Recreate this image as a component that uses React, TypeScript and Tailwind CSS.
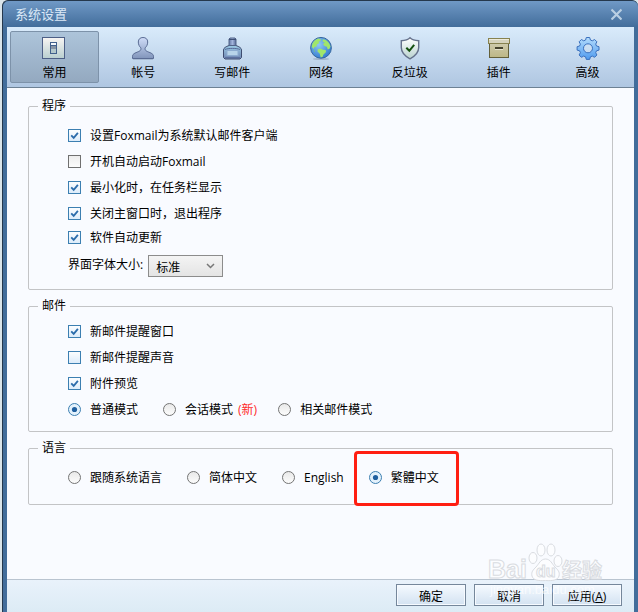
import React, { useState } from 'react';

const GeneralIcon = () => (
  <svg width="24" height="24" viewBox="0 0 24 24" aria-hidden="true">
    <defs>
      <linearGradient id="general-plate" x1="0" y1="0" x2="0" y2="1">
        <stop offset="0" stopColor="#f8f5f3" />
        <stop offset="1" stopColor="#b9cfd0" />
      </linearGradient>
    </defs>
    <rect x="0.5" y="1.5" width="22" height="21" fill="url(#general-plate)" stroke="#4d5f86" />
    <rect x="8.5" y="6.5" width="6" height="11" fill="#8794a3" stroke="#41608c" />
    <rect x="9" y="7" width="5" height="2" fill="#f4f9fc" />
    <path d="M9 9.5h5" stroke="#41608c" />
    <rect x="9" y="13" width="5" height="4" fill="#b3c8cc" />
  </svg>
);

const AccountIcon = () => (
  <svg width="24" height="24" viewBox="0 0 24 24" aria-hidden="true">
    <defs>
      <linearGradient id="account-body" x1="0" y1="0" x2="0" y2="1">
        <stop offset="0" stopColor="#cfdcf8" />
        <stop offset="1" stopColor="#8195bb" />
      </linearGradient>
    </defs>
    <path
      d="M12 1.5c-2.8 0-4.7 1.6-4.7 4.5 0 2.6 1.2 4.6 2.5 5.8.5 1.4-.1 2.7-1.6 3.5-2.6 1.3-6.7 2-6.7 5v2.2h21v-2.2c0-3-4.1-3.7-6.7-5-1.5-.8-2.1-2.1-1.6-3.5 1.3-1.2 2.5-3.2 2.5-5.8 0-2.9-1.9-4.5-4.7-4.5z"
      fill="url(#account-body)"
      stroke="#5a6c94"
    />
    <path d="M2 23.5h20" stroke="#7f92b0" strokeOpacity=".4" />
  </svg>
);

const ComposeIcon = () => (
  <svg width="24" height="24" viewBox="0 0 24 24" aria-hidden="true">
    <defs>
      <linearGradient id="ink-bottle" x1="0" y1="0" x2="0" y2="1">
        <stop offset="0" stopColor="#9ccbe6" />
        <stop offset="1" stopColor="#7186b2" />
      </linearGradient>
      <linearGradient id="ink-cap" x1="0" y1="0" x2="1" y2="0">
        <stop offset="0" stopColor="#6478a5" />
        <stop offset=".5" stopColor="#a3b5dc" />
        <stop offset="1" stopColor="#566a98" />
      </linearGradient>
    </defs>
    <path d="M9 9.5h7c3 1.2 5.5 2.3 5.5 4.5v7.500l-1.500 1.500H5l-1.500-1.500V14c0-2.200 2.500-3.300 5.500-4.500z" fill="url(#ink-bottle)" stroke="#3e4c70" />
    <path d="M9 3l1-1h5l1 1v6.500H9z" fill="url(#ink-cap)" stroke="#526488" />
    <path d="M9 3.500h7" stroke="#3f5076" />
    <path d="M5 13.500c3-1.500 12-1.500 15 0" fill="none" stroke="#566a98" />
    <rect x="7" y="14.5" width="11" height="5" fill="#b8d4e9" stroke="#8dacd0" />
    <path d="M5 21.500h15" stroke="#5c709f" />
  </svg>
);

const NetworkIcon = () => (
  <svg width="24" height="24" viewBox="0 0 24 24" aria-hidden="true">
    <defs>
      <radialGradient id="globe-sea" cx=".4" cy=".35" r=".7">
        <stop offset="0" stopColor="#8fc8f5" />
        <stop offset="1" stopColor="#2f78cf" />
      </radialGradient>
    </defs>
    <ellipse cx="12" cy="23" rx="8" ry="1" fill="#7d92ac" fillOpacity=".5" />
    <circle cx="12" cy="11.8" r="10.4" fill="url(#globe-sea)" stroke="#39699f" />
    <path d="M2.800 11c.3-4 3-7.400 6.600-8.400l2.400.7-.2 1.700-2 .8.600 1.500-2.200 1-.5 2.200-2.200.6-.3 2z" fill="#a0e66c" />
    <path d="M13.800 3.200c3.800.5 7 3.600 7.700 7.400l-1 2.200-1.700.6-1-2.700-2.300-.6-1.600-2.100 1.900-1.200-2.200-1.400z" fill="#a0e66c" />
    <path d="M8.800 13.200l2.600-.8 2.600 1.300 2.700.4.300 2-2.700 2.600-.6 2.100-2 .6-.9-3.600-2.300-2.200z" fill="#a0e66c" />
    <path d="M4.400 13l1.500 2.300-.6.900z" fill="#7acb72" />
  </svg>
);

const SpamIcon = () => (
  <svg width="24" height="24" viewBox="0 0 24 24" aria-hidden="true">
    <defs>
      <linearGradient id="shield-face" x1="0" y1="0" x2="0" y2="1">
        <stop offset="0" stopColor="#ffffff" />
        <stop offset="1" stopColor="#b9d2cf" />
      </linearGradient>
    </defs>
    <path
      d="M12 1.800c1.700 1.700 4.600 2.800 8.700 2.900v6.800c0 5-3.300 8.400-8.700 11.300-5.400-2.900-8.700-6.300-8.700-11.300V4.700c4.100-.1 7-1.200 8.700-2.900z"
      fill="url(#shield-face)"
      stroke="#65718b"
      strokeWidth="1.4"
    />
    <path d="M8.300 11.800l3 3 4.900-6" fill="none" stroke="#14500f" strokeWidth="2" />
  </svg>
);

const PluginIcon = () => (
  <svg width="24" height="24" viewBox="0 0 24 24" aria-hidden="true">
    <defs>
      <linearGradient id="box-front" x1="0" y1="0" x2="0" y2="1">
        <stop offset="0" stopColor="#cfcbae" />
        <stop offset="1" stopColor="#bdb785" />
      </linearGradient>
    </defs>
    <rect x="2.5" y="6.5" width="19" height="15" fill="url(#box-front)" stroke="#646039" />
    <rect x="1.5" y="2.5" width="21" height="5" fill="#d6d3bd" stroke="#87824f" />
    <path d="M2 3.500h20" stroke="#eceadb" />
    <path d="M8 12h8" stroke="#45422d" strokeWidth="2" />
    <path d="M8 13.500h8" stroke="#e6e3cd" />
  </svg>
);

const AdvancedIcon = () => (
  <svg width="24" height="24" viewBox="0 0 24 24" aria-hidden="true">
    <defs>
      <linearGradient id="gear-face" x1="0" y1="0" x2="0" y2="1">
        <stop offset="0" stopColor="#b4dcfc" />
        <stop offset="1" stopColor="#4f9bef" />
      </linearGradient>
    </defs>
    <path
      fillRule="evenodd"
      d="M10.300 1.500h3.400l.7 2.500 1.900.8 2.300-1.300 2.300 2.300-1.200 2.300.8 1.900 2.500.7v3.400l-2.500.7-.8 1.900 1.200 2.300-2.300 2.300-2.300-1.200-1.900.8-.7 2.500h-3.400l-.7-2.500-1.900-.8-2.300 1.200-2.300-2.300 1.300-2.300-.8-1.900-2.500-.7v-3.400l2.500-.7.8-1.900-1.300-2.300 2.300-2.300 2.300 1.300 1.900-.8zM12 7.800a4.500 4.500 0 1 0 0 9 4.500 4.500 0 0 0 0-9z"
      fill="url(#gear-face)"
      stroke="#3a70bd"
      strokeLinejoin="round"
    />
  </svg>
);

const tabs = [
  { id: 'general', label: '常用', icon: <GeneralIcon /> },
  { id: 'account', label: '帐号', icon: <AccountIcon /> },
  { id: 'compose', label: '写邮件', icon: <ComposeIcon /> },
  { id: 'network', label: '网络', icon: <NetworkIcon /> },
  { id: 'spam', label: '反垃圾', icon: <SpamIcon /> },
  { id: 'plugin', label: '插件', icon: <PluginIcon /> },
  { id: 'advanced', label: '高级', icon: <AdvancedIcon /> },
];

interface CheckRowProps {
  label: string;
  defaultChecked?: boolean;
  highlighted?: boolean;
}

const CheckRow: React.FC<CheckRowProps> = ({ label, defaultChecked = false, highlighted = defaultChecked }) => (
  <label className="flex h-[26px] items-center gap-[9px] last:h-[22px]">
    <span className="grid">
      <input
        type="checkbox"
        defaultChecked={defaultChecked}
        className={`peer col-start-1 row-start-1 size-[13px] appearance-none border bg-linear-to-b ${
          highlighted ? 'border-[#3c7fb1] from-[#fbfdff] to-[#dcecfa]' : 'border-[#707070] from-[#ededed] to-[#fcfcfc]'
        }`}
      />
      <svg
        className="pointer-events-none invisible col-start-1 row-start-1 peer-checked:visible"
        width="13"
        height="13"
        viewBox="0 0 13 13"
        aria-hidden="true"
      >
        <path d="M3.200 6.300l2.500 2.600 4.200-5" fill="none" stroke="#2b6cab" strokeWidth="1.8" />
      </svg>
    </span>
    <span className="pt-0.5">{label}</span>
  </label>
);

interface RadioOptionProps {
  name: string;
  defaultChecked?: boolean;
  boxed?: boolean;
  children: React.ReactNode;
}

const RadioOption: React.FC<RadioOptionProps> = ({ name, defaultChecked, boxed, children }) => (
  <label className="relative flex h-[26px] items-center gap-[9px] whitespace-nowrap">
    <span className="grid">
      <input
        type="radio"
        name={name}
        defaultChecked={defaultChecked}
        className="peer col-start-1 row-start-1 size-[13px] appearance-none rounded-full border border-[#747474] bg-linear-to-b from-[#e9e9e9] to-[#fcfcfc] checked:border-[#3c7fb1] checked:from-[#e3f1fc] checked:to-[#e3f1fc]"
      />
      <svg
        className="pointer-events-none invisible col-start-1 row-start-1 peer-checked:visible"
        width="13"
        height="13"
        viewBox="0 0 13 13"
        aria-hidden="true"
      >
        <circle cx="6.5" cy="6.5" r="2.6" fill="#1f5f9f" />
      </svg>
    </span>
    <span className="pt-0.5">{children}</span>
    {boxed && (
      <span className="pointer-events-none absolute -top-[13px] -right-5 -bottom-4 -left-[15px] rounded-sm border-3 border-[#ff1e12]" />
    )}
  </label>
);

interface SectionProps {
  title: string;
  className: string;
  children: React.ReactNode;
}

const Section: React.FC<SectionProps> = ({ title, className, children }) => (
  <fieldset className={`rounded-xs border border-[#c3c4c6] pr-2 pl-[39px] ${className}`}>
    <legend className="-ml-[30px] px-1 leading-4">{title}</legend>
    {children}
  </fieldset>
);

const Watermark = () => (
  <div className="pointer-events-none absolute right-8 bottom-3 h-[60px] w-[120px]" aria-hidden="true">
    <svg width="120" height="60" viewBox="0 0 120 60">
      <g fill="#fcfdff" stroke="#d9dce1">
        <ellipse cx="47" cy="18" rx="4" ry="5.5" />
        <ellipse cx="55" cy="10" rx="4" ry="6" />
        <ellipse cx="65" cy="10" rx="4" ry="6" />
        <ellipse cx="72" cy="21" rx="4" ry="5.5" />
        <path d="M59.500 19c5 0 6.500 5 9.500 8s5 5 4 9-6 5-13.500 4.500c-7.500.5-12.500-.5-13.500-4.500s1-6 4-9 4.500-8 9.500-8z" />
      </g>
      <g className="font-['Liberation_Sans',sans-serif] font-bold" fill="#fcfdff" stroke="#d9dce1">
        <text x="2" y="38" fontSize="25">Bai</text>
        <text x="50" y="37" fontSize="16">du</text>
      </g>
      <text
        x="76"
        y="38"
        fontSize="20"
        fill="#fcfdff"
        stroke="#d9dce1"
        className="font-['Noto_Sans_CJK_SC',sans-serif] font-bold"
      >
        经验
      </text>
      <text x="4" y="54" fontSize="13" fill="#ffffff" fillOpacity=".7" className="font-['Liberation_Sans',sans-serif]">
        jingyan.baidu.com
      </text>
    </svg>
  </div>
);

const buttonClass =
  'h-[22px] w-[70px] border border-[#75879b] bg-linear-to-b from-[#f5faff] to-[#d3e2f1] pt-0.5 text-center leading-5 shadow-[inset_0_0_0_1px_#f6faff]';

const App = () => {
  const [activeTab, setActiveTab] = useState('general');

  return (
    <div className="min-h-screen bg-[#dbe5ea] pl-0.5 font-['Open_Sans','Noto_Sans_CJK_SC',sans-serif] text-xs text-black">
      <div className="relative flex min-h-screen flex-col rounded-t-md border-t border-l border-[#25384d] bg-[#426d9b]">
        <header className="flex h-[26px] items-center justify-between rounded-t-md bg-linear-to-b from-[#7099c6] to-[#426d9b] pr-4 pl-3">
          <h1 className="text-[13px] leading-6 text-[#dce9f7]">系统设置</h1>
          <button type="button" aria-label="关闭">
            <svg width="11" height="12" viewBox="0 0 11 12" aria-hidden="true">
              <path d="M.5 1.500l10 10M10.500 1.500L.5 11.500" stroke="#bacfe3" strokeWidth="2.2" />
            </svg>
          </button>
        </header>

        <main className="mr-1 ml-1 flex flex-1 flex-col bg-[#f9fbff]">
          <nav className="grid h-[61px] grid-cols-7 border-b border-[#6d8194] bg-linear-to-b from-[#d9ebfb] to-[#afc6e1] pt-1 pr-0.5 pb-1 pl-[3px]">
            {tabs.map((tab) => (
              <button
                key={tab.id}
                type="button"
                aria-pressed={tab.id === activeTab}
                onClick={() => setActiveTab(tab.id)}
                className={`flex flex-col items-center rounded-xs border pt-1 ${
                  tab.id === activeTab
                    ? 'border-[#7d92a9] bg-linear-to-b from-[#adc4da] to-[#94a9c0]'
                    : 'border-transparent'
                }`}
              >
                {tab.icon}
                <span className="mt-[5px] leading-4">{tab.label}</span>
              </button>
            ))}
          </nav>

          <form className="flex flex-1 flex-col gap-2 pt-[10px] pr-[21px] pl-[21px]">
            <Section title="程序" className="pt-2 pb-3">
              <div>
                <CheckRow label="设置Foxmail为系统默认邮件客户端" defaultChecked />
                <CheckRow label="开机自动启动Foxmail" />
                <CheckRow label="最小化时，在任务栏显示" defaultChecked />
                <CheckRow label="关闭主窗口时，退出程序" defaultChecked />
                <CheckRow label="软件自动更新" defaultChecked />
              </div>
              <div className="mt-[7px] flex gap-[5px]">
                <label htmlFor="font-size" className="leading-5">界面字体大小:</label>
                <div className="grid items-center">
                  <select
                    id="font-size"
                    className="col-start-1 row-start-1 h-[22px] w-[75px] appearance-none border border-[#8c8c8c] bg-linear-to-b from-[#f4f4f4] to-[#e4e4e4] pt-0.5 pl-[7px] leading-5"
                  >
                    <option>标准</option>
                    <option>大</option>
                  </select>
                  <svg
                    className="pointer-events-none col-start-1 row-start-1 mr-2 justify-self-end"
                    width="9"
                    height="6"
                    viewBox="0 0 9 6"
                    aria-hidden="true"
                  >
                    <path d="M1 1l3.500 3.500L8 1" fill="none" stroke="#777" strokeWidth="1.5" />
                  </svg>
                </div>
              </div>
            </Section>

            <Section title="邮件" className="pt-1 pb-[9px]">
              <CheckRow label="新邮件提醒窗口" defaultChecked />
              <CheckRow label="新邮件提醒声音" highlighted />
              <CheckRow label="附件预览" defaultChecked />
              <div className="flex gap-[25px]">
                <RadioOption name="mode" defaultChecked>普通模式</RadioOption>
                <RadioOption name="mode">
                  会话模式<span className="-mr-1 ml-[5px] text-[#ff2a2a]">(新)</span>
                </RadioOption>
                <RadioOption name="mode">相关邮件模式</RadioOption>
              </div>
            </Section>

            <Section title="语言" className="pt-2 pb-[14px]">
              <div className="flex gap-[25px]">
                <RadioOption name="language">跟随系统语言</RadioOption>
                <RadioOption name="language">简体中文</RadioOption>
                <RadioOption name="language">English</RadioOption>
                <RadioOption name="language" defaultChecked boxed>繁體中文</RadioOption>
              </div>
            </Section>
          </form>

          <footer className="flex h-[33px] justify-end gap-2 border-t border-[#b9c4d0] bg-linear-to-b from-[#e9f2fb] to-[#dcebf5] pt-1 pr-3">
            <button type="button" className={buttonClass}>确定</button>
            <button type="button" className={buttonClass}>取消</button>
            <button type="button" className={buttonClass}>
              应用(<u>A</u>)
            </button>
          </footer>
        </main>
        <Watermark />
      </div>
    </div>
  );
};

export default App;
